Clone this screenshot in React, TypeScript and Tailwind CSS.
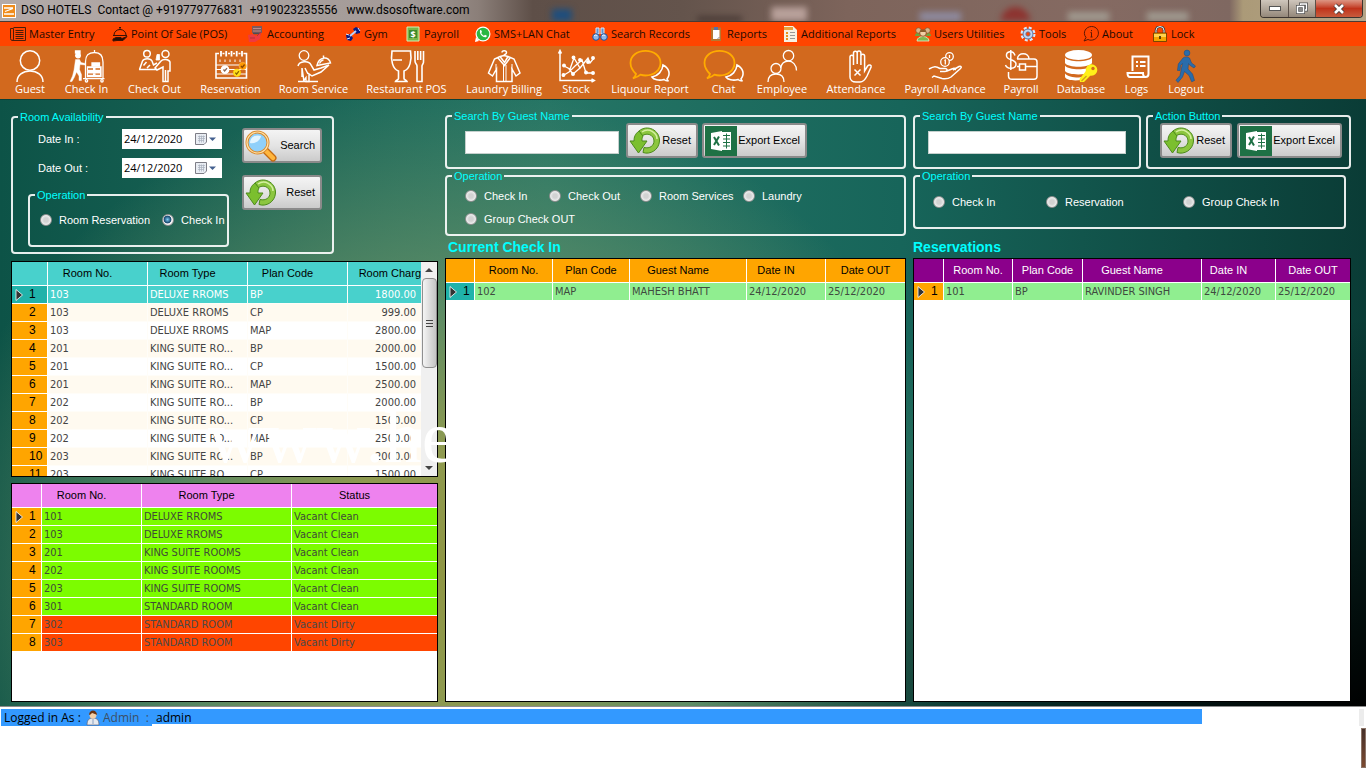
import type { ReactNode } from "react";
import clsx from "clsx";

const SANS = "font-['Open_Sans','Noto_Sans',sans-serif]";
const FORM = "font-['Liberation_Sans',sans-serif]";
const GRID = "font-['DejaVu_Sans_Condensed','Open_Sans',sans-serif]";

/* ---------- menu icons (16 x 16) ---------- */

function MenuIcon({ children }: { children: ReactNode }) {
	return <svg viewBox="0 0 16 16" className="w-4 h-4 shrink-0" fill="none">{children}</svg>;
}

const menuIcons = {
	master: <g stroke="#4a1c08" strokeWidth="1"><path d="M3.5 1.500h12v13h-13a2 2 0 0 1-2-2v-10h3v10.500a1.500 1.500 0 0 1-1.500 1.500" /><path d="M5.500 4.500h8M5.500 6.500h8M5.500 8.500h8M5.500 10.500h8M5.500 12.500h8" /></g>,
	pos: <g stroke="#3a1205"><path d="M2 9a6 5.500 0 0 1 12 0M1 9.500h14M8 3.500V1.500M7 1.500h2" /><path d="M1 13l3-1.500h5l1 1 5-2-4 4H5l-4 .5z" fill="#2a0d04" /></g>,
	accounting: <g><path d="M4 0h10v7H4z" fill="#7d5a5c" /><path d="M5 2.500h8M5 5h8" stroke="#b98a8a" /><path d="M5 7.500h8" stroke="#4c4c55" strokeWidth="1.500" /><path d="M0 9l5-1 3 2 5-4-1 7-5 3H1z" fill="#ee3b3f" /><path d="M9 10l4-4M2 12h5" stroke="#b3303a" /></g>,
	gym: <g><path d="M1 9l4-1 3 4-2 3-4-1zM8 3l3-2 4 2v4l-4 1z" fill="#0a1a80" /><path d="M5 10l6-5" stroke="#b9d3ff" strokeWidth="2" /><path d="M1 8l3 1M13 2l2 3M2 13l3-1" stroke="#dce8ff" /></g>,
	payroll: <g><path d="M2 1h12v14H2z" fill="#7ab648" stroke="#d5efb5" /><path d="M4 4h8v8H4z" fill="#3f8a2d" /><text x="8" y="11.500" fontSize="9" fontWeight="700" textAnchor="middle" fill="#fff">$</text></g>,
	chat: <g><circle cx="8" cy="8" r="7.500" fill="#fff" /><path d="M0 16l1-5 3 4z" fill="#fff" /><circle cx="8" cy="8" r="6.300" fill="#2cb742" /><path d="M5 4.500c1-1 1.500 0 2 1.500l-.8 1c.6 1.300 1.500 2 2.800 2.700l1-1c1.500.6 2.300 1 1.500 2-2 2-7.500-2-6.500-6.200z" fill="#fff" /></g>,
	search: <g><path d="M4 2h3v6H4zM9 2h3v6H9z" fill="#5b8fd0" stroke="#dce8fa" /><circle cx="4" cy="11" r="3.300" fill="#8db7ec" stroke="#244f96" /><circle cx="12" cy="11" r="3.300" fill="#8db7ec" stroke="#244f96" /><path d="M2 10c2-2 3 0 3 0M10 10c2-2 3 0 3 0" stroke="#fff" /></g>,
	reports: <g><path d="M3 1.500h10v13.500H3z" fill="#b77630" /><path d="M5 4h6.500v9H5z" fill="#fff" /><path d="M6 1h4v3H6z" fill="#5870a8" /><path d="M9.500 13l2-2" stroke="#889" /></g>,
	additional: <g><path d="M2 0h9l4 4v12H2z" fill="#f7f1e3" /><path d="M2 1h9v3H2z" fill="#e8a33f" /><path d="M4 7h2M4 10h2M4 13h2" stroke="#e8921f" strokeWidth="2" /><path d="M8 6.500h5M8 9.500h5M8 12.500h5" stroke="#999" /></g>,
	users: <g><path d="M2 15c0-6 12-6 12 0z" fill="#7fb84e" stroke="#e2f0d0" strokeWidth=".8" /><path d="M0 10c0-4 5-4 5 0zM11 10c0-4 5-4 5 0z" fill="#6aa540" /><circle cx="3.500" cy="4.500" r="2.700" fill="#d9b48a" stroke="#7a4a20" strokeWidth=".6" /><circle cx="12.500" cy="4.500" r="2.700" fill="#d9b48a" stroke="#7a4a20" strokeWidth=".6" /><circle cx="8" cy="7" r="3.300" fill="#f0cfa5" stroke="#7a4a20" strokeWidth=".8" /><path d="M5 6c0-3 6-3 6 0z" fill="#8a5a2a" /></g>,
	tools: <g><circle cx="8" cy="8" r="6.200" stroke="#dde9f8" strokeWidth="2.600" strokeDasharray="2.870 2" /><circle cx="8" cy="8" r="5" fill="#c4d6ee" stroke="#5279b0" /><circle cx="8" cy="8" r="2.200" fill="#ff4500" stroke="#5279b0" strokeWidth=".8" /></g>,
	about: <g stroke="#5a1806"><path d="M1 15l2-3.500C-1 6.500 3 .5 8.500.5S16 5 15.300 8.500C14.500 13 9 15.500 5 13.500z" /><path d="M8.500 6.500V11M8.500 4v1.200M7.500 11h2M7.500 6.500h1" /></g>,
	lock: <g><path d="M4 8V4.500a4 4 0 0 1 8 0V8" stroke="#3d3d3d" strokeWidth="2.600" /><path d="M4 8V4.500a4 4 0 0 1 8 0V8" stroke="#eee" strokeWidth="1" /><path d="M1.500 7h13v8.500h-13z" fill="#f5a400" stroke="#5a3a00" strokeWidth=".8" /><path d="M2 8h12v3H2z" fill="#ffd34d" /><path d="M8 10v3" stroke="#3a2500" strokeWidth="1.600" /></g>,
};

const menu = [
	{ icon: menuIcons.master, label: "Master Entry", w: "w-[102px]" },
	{ icon: menuIcons.pos, label: "Point Of Sale (POS)", w: "w-[136px]" },
	{ icon: menuIcons.accounting, label: "Accounting", w: "w-[97px]" },
	{ icon: menuIcons.gym, label: "Gym", w: "w-[60px]" },
	{ icon: menuIcons.payroll, label: "Payroll", w: "w-[70px]" },
	{ icon: menuIcons.chat, label: "SMS+LAN Chat", w: "w-[117px]" },
	{ icon: menuIcons.search, label: "Search Records", w: "w-[116px]" },
	{ icon: menuIcons.reports, label: "Reports", w: "w-[74px]" },
	{ icon: menuIcons.additional, label: "Additional Reports", w: "w-[133px]" },
	{ icon: menuIcons.users, label: "Users Utilities", w: "w-[105px]" },
	{ icon: menuIcons.tools, label: "Tools", w: "w-[63px]" },
	{ icon: menuIcons.about, label: "About", w: "w-[69px]" },
	{ icon: menuIcons.lock, label: "Lock", w: "w-[60px]" },
];

/* ---------- toolbar icons (32 x 32) ---------- */

const bubbles = (
	<g>
		<path d="M2 24C-2 20-3.500 17-3.500 13 -3.500 6 3 .8 11.500.8S26.500 6 26.500 13 20 25.500 11.500 25.500c-2 0-3.500-.3-5-.8C4 27-1 28.500-1 28.500S1.500 26.500 2 24z" stroke="#ffab00" strokeWidth="1.800" />
		<path d="M29 15c6 3 8 9 4 14 .5 1.500 1.500 2 1.500 2s-3 0-4.500-1.500c-5 1.500-10.500 0-12-2.500 6-1 10.500-6 11-12z" strokeWidth="1.600" />
	</g>
);

const tools = [
	{ label: "Guest", w: "w-[50px]", icon: <g strokeWidth="1.500"><circle cx="16" cy="10.500" r="9.700" /><path d="M3 32C3 25 9 21 16 21s13 4 13 11" /></g> },
	{
		label: "Check In", w: "w-[63px]", icon: <g>
			<circle cx="7" cy="5.500" r="2.300" fill="#fff" /><path d="M4.500 1h4.500v2H4.500z" fill="#fff" />
			<path d="M4.500 9.500h4l1.500 3 4.500 1v1.500l-5.500-.5-.5 5 2 5v6H8V26l-2.500-4-2 5L1 31.500H-1L1.500 26 3 20z" fill="#fff" strokeWidth=".4" />
			<path d="M14.500 28V12C14.500 5 18 2.500 23.500 2.500S32 5 32 12v16M23.500 2.500V0M12 28.700h21.500" />
			<circle cx="15.500" cy="30.800" r="1.200" /><circle cx="31" cy="30.800" r="1.200" />
			<path d="M21 13h7.500v3H21z" fill="#fff" /><path d="M16.500 17h13.500v4.500H16.500zM16.500 22h13.500v4.500H16.500z" fill="#fff" />
			<path d="M17 19h12M17 24.200h12" stroke="#d2691e" /><path d="M22 19h2.500M22 24.200h2.500" stroke="#fff" strokeWidth="2" />
		</g>
	},
	{
		label: "Check Out", w: "w-[73px]", icon: <g strokeWidth="1.500">
			<circle cx="8" cy="3.800" r="3.300" />
			<path d="M.5 19.500L3.500 11c1.500-3 8-3 9.500 0l1.500 4 3.500-2M4.500 15.500l3-3.500M0 19.500h18M11 15l-3 3" />
			<path d="M17 10l1-5.500h2.500v5.500z" fill="#fff" strokeWidth=".8" />
			<circle cx="26.500" cy="4" r="3.500" />
			<path d="M22 11c2-2.500 8-2 9 1v9h-2v10.500h-5V17l-6 3-2-2z" /><path d="M26.500 20v11" />
		</g>
	},
	{
		label: "Reservation", w: "w-[79px]", icon: <g>
			<path d="M4 3.500H1v24.500h30.500V3.500h-3M7.500 3.500h2M13 3.500h2M18 3.500h2M23.500 3.500h2" strokeWidth="1.600" />
			<path d="M6 1v5.500M11.200 1v5.500M16.500 1v5.500M21.700 1v5.500M27 1v5.500" strokeWidth="1.800" />
			<path d="M5 9.500v2.500M10 9.500v2.500M15 9.500v2.500M20 9.500v2.500M25 9.500v2.500M1 15h30M1 19.500h30M1 24h30" strokeWidth="1" />
			<circle cx="10" cy="19.700" r="3.700" fill="#fff" /><path d="M8.500 19.500l1.200 1.500 2.300-2.800" stroke="#865" />
			<circle cx="27.700" cy="16" r="3.700" fill="#ff9800" stroke="#ffb74d" strokeWidth=".6" /><path d="M26 16l1.300 1.500 2.300-3" stroke="#8a4500" />
			<circle cx="22" cy="22.700" r="3.700" fill="#ffe11a" stroke="#ffd000" strokeWidth=".6" /><path d="M20.300 22.600l1.300 1.500 2.300-3" stroke="#8a6500" />
		</g>
	},
	{
		label: "Room Service", w: "w-[87px]", icon: <g>
			<circle cx="6" cy="5.500" r="4.800" />
			<path d="M0 16c1-5 11-6 13-1l3 5 7-2 8-3-8 7-9 4-3-2v7.500H6L4 18v9M7 18l3 6" strokeWidth="1.500" /><path d="M0 31.500h5l3-4v4h12" />
			<path d="M19 15.500c1-5 4-7 7-7.500s6 2 6.500 5zM25.500 8V5.500" strokeWidth="1.500" /><path d="M21.500 13.500c1-2 2.500-3.500 4-3.500" />
		</g>
	},
	{
		label: "Restaurant POS", w: "w-[99px]", icon: <g strokeWidth="1.600">
			<path d="M1 1h18.500c1.500 9-.5 18-6.500 20v7.500c0 1.500 2.500 1.500 3 3H4.500c.5-1.500 3-1.500 3-3V21C1.500 19-.5 10 1 1zM2 10h9" />
			<path d="M24 1v10c0 3 2 3 2 5v15.500h5V16c0-2 2-2 1.500-5V1M26.800 1v9M29.600 1v9" />
		</g>
	},
	{
		label: "Laundry Billing", w: "w-[96px]", icon: <g strokeWidth="1.500">
			<path d="M14 2.500C14 0 18.500 0 18.500 2.500S16 3.500 16 6" />
			<path d="M12 6.500l4-1 4 1 6 2.500 6 14-4 3-4-7v12.500H8.500V19l-4 7-4-3 6-14zM12 6.500l4.500 6 3.500-6M10 8l6.500 7.500L22 8" />
			<path d="M15.500 15v16.500M18 15v16.500M8 14v5M24 14v5" strokeWidth="1" />
		</g>
	},
	{
		label: "Stock", w: "w-[48px]", icon: <g>
			<path d="M0 1v29.500h34M-1.500 3.500L0 .500l1.500 3M31.500 29l2.800 1.500-2.800 1.500" strokeWidth="1.500" />
			<path d="M4 16l6 3 4-11 6 10 8-10 2 5 4-5M4 25l5-3 6-6 7-6 4 13h7M9 19l4 5 7-6" />
			<g fill="#fff"><circle cx="4" cy="15.500" r="1.300" /><circle cx="13.500" cy="7.500" r="1.300" /><circle cx="3.500" cy="25" r="1.300" /><circle cx="13" cy="24" r="1.300" /><circle cx="20" cy="10" r="1.300" /><circle cx="28" cy="12" r="1.300" /><circle cx="33" cy="8" r="1.300" /><circle cx="26" cy="22.500" r="1.300" /><circle cx="33" cy="23" r="1.300" /></g>
		</g>
	},
	{ label: "Liquour Report", w: "w-[100px]", icon: bubbles },
	{ label: "Chat", w: "w-[47px]", icon: bubbles },
	{ label: "Employee", w: "w-[70px]", icon: <g><circle cx="22.500" cy="5.700" r="5.200" /><path d="M14.500 18c1-4.500 4-7 8-7s8 4 8 9.500" /><circle cx="10" cy="18.500" r="5" /><path d="M2 32c0-5 3-8 8-8s8 3 8 8" /></g> },
	{
		label: "Attendance", w: "w-[78px]", icon: <g>
			<path d="M10 27V7c0-2.500 3.500-2.500 3.500 0v8V3c0-2.500 3.700-2.500 3.700 0v11V3c0-3 3.700-2.500 3.700 0v12V6c0-2.500 3.700-2.500 3.700 0v15l3-5c1.500-2 4-1 3.500 1L27 26c-2 4-4 6-7 6h-4c-3.500 0-6-2-6-5z" strokeWidth="1.500" />
			<path d="M14.500 19.500l6 6M20.500 19.500l-6 6" strokeWidth="1.500" />
		</g>
	},
	{
		label: "Payroll Advance", w: "w-[100px]", icon: <g>
			<circle cx="20.500" cy="6.500" r="3.800" /><circle cx="16" cy="12" r="4.300" fill="#d2691e" /><path d="M15.300 10.500l1-.5v4.500M20.500 5v3" />
			<path d="M0 19c5-3 7-3 11-.5h5c3 0 2.500 3 0 3h-5M18 21l6-2.500c2-1 3 .5 2 1.500M24 20l6-3.500c2-1 3 1 1.500 2L22 27c-3 2-6 2-9 1.500L5 26l-2 1.500" strokeWidth="1.500" />
		</g>
	},
	{
		label: "Payroll", w: "w-[52px]", icon: <g>
			<path d="M10 5.500C8-.5 1 1.500 1.500 6s9.500 3 9.500 8-8.500 6-10.500 1M5.800 0v20" strokeWidth="1.500" />
			<path d="M12 9h17c2 0 3 1 3 3v14c0 2-1 3.300-3 3.300H7c-2 0-3.500-1-3.500-3.300v-4M12 16.500h3M20.500 16.500H32M12.500 9c0-7 11.500-7 11.500 0M14.500 14h6v6h-6z" strokeWidth="1.500" />
		</g>
	},
	{
		label: "Database", w: "w-[68px]", icon: <g stroke="none">
			<ellipse cx="13.500" cy="5" rx="13.500" ry="5" fill="#fff" />
			<path d="M0 7.500c3 5 24 5 27 0V13c-3 5-24 5-27 0zM0 15.500c3 5 24 5 27 0V19c-5 0-7 3-7 5-9 1-18 0-20-3zM0 23.500c3 4 13 4.500 19 3.500l-2.500 3C8 31 1 30 0 27z" fill="#fff" />
			<circle cx="26.500" cy="20" r="5.800" fill="#fff01a" /><path d="M21 21l5 4-7 7h-4l-.5-3z" fill="#fff01a" /><circle cx="28" cy="18.500" r="1.700" fill="#d2691e" /><path d="M16.500 31l5-5" stroke="#d2a01e" />
		</g>
	},
	{ label: "Logs", w: "w-[43px]", icon: <g strokeWidth="2"><path d="M11.500 21V6.500h16V24c0 2-1 3-3 3H9c-2 0-2.500-2-2.500-4h15.500c0 3 1 4 2.500 4" /><path d="M15 12h2M15 16h2M19 12h5.500M19 16h5.500" strokeWidth="1.800" /></g> },
	{
		label: "Logout", w: "w-[56px]", icon: <g stroke="#1f4f85" strokeWidth=".6" fill="#2a6cab">
			<circle cx="17" cy="3" r="2.900" />
			<path d="M13 8c1.500-1.500 5-1.500 6.500 0l2 5 4 3-1.500 2-4.500-3-1-1.500-.5 5.500 4.500 5 2 6.500-2.800 1.300-2.700-6.300-4.500-4-2 5.500-4.500 5.500-2-2.300 4-4.700 2.500-12-2 2-.5 5H7.500l.8-6.500z" />
		</g>
	},
];

/* ---------- form pieces ---------- */

function ResetIcon() {
	return (
		<svg viewBox="0 0 32 32" className="w-8 h-8 shrink-0" fill="none">
			<path d="M10 6C18-1 31 5 30.500 16 30 25 21 30 14 27.500l1-5c6 1.500 10-2 10-6.500 0-6-7-9-12-5z" fill="#8cc63f" stroke="#4d8a1c" />
			<path d="M13 7C20 2 28 8 28 14" stroke="#d4efa0" strokeWidth="1.500" />
			<path d="M10 6c-4 3-5 6-5 10H1l8.500 12L18 16h-5c0-2 0-3.500 1-5z" fill="#7bbf2e" stroke="#4d8a1c" />
		</svg>
	);
}

function SearchIcon() {
	return (
		<svg viewBox="0 0 32 32" className="w-8 h-8 shrink-0" fill="none">
			<path d="M20 20l8 8" stroke="#c46a10" strokeWidth="7" strokeLinecap="round" />
			<path d="M20 20l8 8" stroke="#ffb63d" strokeWidth="4.500" strokeLinecap="round" />
			<circle cx="12.500" cy="12.500" r="10.500" fill="#8fd0fa" stroke="#d98a2b" strokeWidth="3" />
			<circle cx="12.500" cy="12.500" r="10.500" stroke="#ffe0a8" strokeWidth="1.200" />
			<path d="M5 13c0-6 6-9 11-7-1 5-6 8-11 7z" fill="#e3f5ff" />
		</svg>
	);
}

function ExcelIcon() {
	return (
		<svg viewBox="0 0 32 30" className="w-8 h-[30px] shrink-0">
			<path d="M0 0h32v30H0z" fill="#1e7145" />
			<path d="M17 6h9v18h-9z" fill="#fff" />
			<path d="M18 9.500h7M18 13h7M18 16.500h7M18 20h7M21.500 7.500v15" stroke="#1e7145" strokeWidth="1" />
			<path d="M6 7l11-2v20L6 23z" fill="#fff" />
			<path d="M9 11l5 8.500M14 10.500l-5 8.500" stroke="#1e7145" strokeWidth="2" />
		</svg>
	);
}

function Group({ title, className, children }: { title: string; className?: string; children: ReactNode }) {
	return (
		<fieldset className={clsx("min-w-0 border-2 border-white/90 rounded", className)}>
			<legend className="ml-[5px] px-[2px] leading-[14px] text-[#00ffff]">{title}</legend>
			{children}
		</fieldset>
	);
}

function PushButton({ icon, className, children }: { icon: ReactNode; className?: string; children: ReactNode }) {
	return (
		<button className={clsx("h-[35px] shrink-0 flex items-center justify-between pl-px pr-[5px] rounded-[3px] border-2 border-[#8a8a8a] bg-linear-to-b from-[#f4f4f4] via-[#e4e4e4] to-[#cbcbcb] text-black whitespace-nowrap", className)}>
			{icon}
			<span>{children}</span>
		</button>
	);
}

function Radio({ name, label, checked, className }: { name: string; label: string; checked?: boolean; className?: string }) {
	return (
		<label className={clsx("flex items-center gap-[7px] leading-4 whitespace-nowrap text-white", className)}>
			<input
				type="radio"
				name={name}
				defaultChecked={checked}
				className="appearance-none shrink-0 w-3 h-3 rounded-full border border-[#8e8f8f] bg-[radial-gradient(circle,#d2d2d2_30%,#f4f4f4_75%)] checked:bg-[radial-gradient(circle_at_45%_45%,#7fd0f5_0,#14446b_45%,#f4f4f4_55%)]"
			/>
			{label}
		</label>
	);
}

function DateField({ id, label }: { id: string; label: string }) {
	return (
		<div className="flex items-center h-[18px] pl-[10px] text-white">
			<label htmlFor={id} className="w-[84px]">{label}</label>
			<div className="flex items-center w-[100px] h-5 bg-white">
				<input id={id} defaultValue="24/12/2020" className={clsx("w-[73px] pl-[2px] text-[11px] text-black outline-none", SANS)} />
				<svg viewBox="0 0 22 12" className="w-[22px] h-3" fill="none">
					<path d="M.5.500h11v8.500l-2.500 2.500H.5z" fill="#e9edf3" stroke="#7d7d86" />
					<path d="M3 3.500h7M3 5.500h7M3 7.500h6M4.500 2.500v7M6.500 2.500v7M8.500 2.500v7" stroke="#a9b0bd" strokeWidth=".7" />
					<path d="M14 4.500h7L17.500 8z" fill="#44608f" />
				</svg>
			</div>
		</div>
	);
}

/* ---------- data grids ---------- */

type Column = { title: string; w: string; head?: string; cell?: string };

function DataGrid({ label, columns, rows, headClass, rowHeadWidth, rowHead, rowClass, gap }: {
	label: string;
	columns: Column[];
	rows: string[][];
	headClass: string;
	rowHeadWidth: string;
	rowHead: (index: number) => string;
	rowClass: (row: string[], index: number) => string;
	gap?: string;
}) {
	return (
		<table aria-label={label} className="w-full table-fixed border-separate border-spacing-0">
			<colgroup>
				<col className={rowHeadWidth} />
				{columns.map((column) => <col key={column.title} className={column.w} />)}
			</colgroup>
			<thead>
				<tr className={clsx("h-6", headClass)}>
					<td className="p-0 border-b border-r border-white" />
					{columns.map((column) => (
						<th key={column.title} className={clsx("p-0 font-normal whitespace-nowrap overflow-hidden border-b border-r border-white last:border-r-0", FORM, column.head)}>
							{column.title}
						</th>
					))}
				</tr>
			</thead>
			<tbody className={clsx("text-[11px]", GRID)}>
				{rows.map((row, index) => (
					<tr key={index} className={clsx("h-[18px] leading-[17px]", rowClass(row, index))}>
						<th scope="row" className={clsx("p-0 font-normal text-black border-b border-r border-white", rowHead(index))}>
							<div className="flex items-center text-xs leading-[17px] font-['Liberation_Sans',sans-serif]">
								<span className="w-[17px] pl-[3px]">
									{index === 0 && (
										<svg viewBox="0 0 8 12" className="w-2 h-3"><path d="M1 .5l6.500 5.500L1 11.500z" fill="#333" stroke="#fff" strokeWidth=".8" /></svg>
									)}
								</span>
								{index + 1}
							</div>
						</th>
						{row.map((value, i) => (
							<td key={i} className={clsx("p-0 pl-[2px] whitespace-nowrap overflow-hidden border-b border-r last:border-r-0", gap ?? "border-white", columns[i].cell)}>
								{value}
							</td>
						))}
					</tr>
				))}
			</tbody>
		</table>
	);
}

const rates = [
	["103", "DELUXE RROMS", "BP", "1800.00"],
	["103", "DELUXE RROMS", "CP", "999.00"],
	["103", "DELUXE RROMS", "MAP", "2800.00"],
	["201", "KING SUITE RO...", "BP", "2000.00"],
	["201", "KING SUITE RO...", "CP", "1500.00"],
	["201", "KING SUITE RO...", "MAP", "2500.00"],
	["202", "KING SUITE RO...", "BP", "2000.00"],
	["202", "KING SUITE RO...", "CP", "1500.00"],
	["202", "KING SUITE RO...", "MAP", "2500.00"],
	["203", "KING SUITE RO...", "BP", "2000.00"],
	["203", "KING SUITE RO...", "CP", "1500.00"],
];

const rooms = [
	["101", "DELUXE RROMS", "Vacant Clean"],
	["103", "DELUXE RROMS", "Vacant Clean"],
	["201", "KING SUITE ROOMS", "Vacant Clean"],
	["202", "KING SUITE ROOMS", "Vacant Clean"],
	["203", "KING SUITE ROOMS", "Vacant Clean"],
	["301", "STANDARD ROOM", "Vacant Clean"],
	["302", "STANDARD ROOM", "Vacant Dirty"],
	["303", "STANDARD ROOM", "Vacant Dirty"],
];

function TitleBar() {
	return (
		<header className="relative flex items-center h-[22px] pl-[2px] border-b border-[#4a3a35] overflow-hidden bg-[linear-gradient(90deg,#b3aaa8_0%,#a39a97_30%,#8b7f79_35%,#5e4f48_39%,#64544c_50%,#7d645b_62%,#856a62_80%,#7f6861_90%,#ab9a78_91%,#b5a487_100%)]">
			<svg viewBox="0 0 14 14" className="w-[14px] h-[14px] shrink-0">
				<path d="M0 0h14v14H0z" fill="#fff" /><path d="M1 1h12v12H1z" fill="#f08c1c" /><path d="M2 10h10M2 4h9M3 7.500l8-3" stroke="#fff" fill="none" strokeWidth="1.300" />
			</svg>
			<h1 className="shrink-0 pl-[5px] text-[12px] leading-[21px] text-black whitespace-pre font-['Roboto',sans-serif]">DSO HOTELS  Contact @ +919779776831  +919023235556   www.dsosoftware.com</h1>
			<svg viewBox="0 0 800 21" preserveAspectRatio="none" className="flex-1 min-w-0 h-[21px] blur-[3px]">
				<path d="M83 9h20v14H83z" fill="#1f4e7d" /><path d="M230 17h45v6h-45z" fill="#3d302c" /><path d="M305 7h36v14h-36z" fill="#b8a09a" />
				<path d="M455 12h42v10h-42z" fill="#8e8ba0" /><circle cx="552" cy="22" r="15" fill="#8d3430" /><path d="M605 12h42v10h-42zM685 12h42v10h-42z" fill="#a09a90" />
			</svg>
			<div className="self-start flex shrink-0 mr-[3px] h-[18px] rounded-b-[4px] border border-t-0 border-[#3c342f] overflow-hidden">
				<button aria-label="Minimize" className="w-7 border-r border-[#5c5048] bg-linear-to-b from-[#cfc6bc] to-[#94887a] flex justify-center items-center"><span className="w-3 h-[5px] bg-white border border-[#555]" /></button>
				<button aria-label="Restore" className="w-[27px] border-r border-[#5c5048] bg-linear-to-b from-[#cfc6bc] to-[#94887a] flex justify-center items-center">
					<svg viewBox="0 0 14 13" className="w-[14px] h-[13px]" fill="none"><path d="M5.500 2h6v6h-6z" stroke="#555" strokeWidth="3" /><path d="M5.500 2h6v6h-6z" stroke="#fff" strokeWidth="1.300" /><path d="M2.500 4.500h6v6h-6z" fill="#888" stroke="#555" strokeWidth="3" /><path d="M2.500 4.500h6v6h-6z" stroke="#fff" strokeWidth="1.500" /></svg>
				</button>
				<button aria-label="Close" className="w-[46px] bg-linear-to-b from-[#dc9583] via-[#c0321a] to-[#c85a3c] flex justify-center items-center">
					<svg viewBox="0 0 14 12" className="w-[14px] h-3"><path d="M3 2l8 8M11 2l-8 8" stroke="#4a3a3a" strokeWidth="4.500" /><path d="M3 2l8 8M11 2l-8 8" stroke="#fff" strokeWidth="2.600" /></svg>
				</button>
			</div>
		</header>
	);
}

export default function App() {
	return (
		<div className={clsx("flex flex-col min-h-screen bg-white overflow-x-hidden text-[11px]", FORM)}>
			<TitleBar />

			<nav className={clsx("flex items-center h-6 pl-[10px] bg-[#ff4500] text-[11px] text-[#1e0a02]", SANS)}>
				{menu.map((item) => (
					<button key={item.label} className={clsx("flex items-center gap-[3px] shrink-0 whitespace-nowrap", item.w)}>
						<MenuIcon>{item.icon}</MenuIcon>
						{item.label}
					</button>
				))}
			</nav>

			<div className={clsx("flex h-[53px] pt-1 pl-[5px] bg-[#d2691e] text-[11px] text-white", SANS)}>
				{tools.map((item) => (
					<button key={item.label} className={clsx("flex flex-col items-center shrink-0 whitespace-nowrap leading-[14px]", item.w)}>
						<svg viewBox="0 0 32 32" className="w-8 h-8 overflow-visible" fill="none" stroke="#fff" strokeWidth="1.300">{item.icon}</svg>
						{item.label}
					</button>
				))}
			</div>

			<main className="relative flex-1 grid grid-cols-[427fr_461fr_438fr] gap-[7px] pl-[11px] pr-[15px] pb-1 border-t border-[#0a4038] bg-[radial-gradient(ellipse_60%_75%_at_110%_110%,#000_20%,transparent_100%),radial-gradient(ellipse_38%_80%_at_33%_78%,#8f9644_0%,#8f9a50_25%,rgba(111,149,104,0.75)_55%,transparent_100%),linear-gradient(90deg,#0d5347,#257565_40%,#17655a_66%,#0a3c36)]">
				<section className="flex flex-col pt-[10px] min-w-0">
					<Group title="Room Availability" className="w-[323px] h-36">
						<div className="flex gap-[13px] pl-[15px]">
							<div className="w-[201px] flex flex-col gap-[11px] pt-[6px]">
								<DateField id="date-in" label="Date In :" />
								<DateField id="date-out" label="Date Out :" />
								<Group title="Operation" className="h-[59px]">
									<div className="flex gap-3 pl-[10px] pt-[10px]">
										<Radio name="availability" label="Room Reservation" />
										<Radio name="availability" label="Check In" checked />
									</div>
								</Group>
							</div>
							<div className="flex flex-col gap-3 pt-1">
								<PushButton icon={<SearchIcon />} className="w-20">Search</PushButton>
								<PushButton icon={<ResetIcon />} className="w-20">Reset</PushButton>
							</div>
						</div>
					</Group>

					<div className="mt-[7px] h-[216px] flex border border-black bg-white overflow-hidden">
						<div className="flex-1 min-w-0">
							<DataGrid
								label="Room rates"
								headClass="bg-[#48d1cc] text-black"
								rowHeadWidth="w-[36px]"
								rowHead={(index) => (index === 0 ? "bg-[#20b2aa]" : "bg-[#ffa500]")}
								rowClass={(_, index) => (index === 0 ? "bg-[#48d1cc] text-white" : index % 2 ? "bg-[#fffaf0] text-[#444]" : "bg-white text-[#444]")}
								gap="border-[#fffdf8]"
								rows={rates}
								columns={[
									{ title: "Room No.", w: "w-[100px]", head: "pr-5" },
									{ title: "Room Type", w: "w-[100px]", head: "pr-5" },
									{ title: "Plan Code", w: "w-[100px]", head: "pr-5" },
									{ title: "Room Charg", w: "", head: "text-right", cell: "text-right pr-[5px]" },
								]}
							/>
						</div>
						<div className="w-4 flex flex-col items-center bg-[#f0f0f0]">
							<svg viewBox="0 0 8 16" className="w-2 h-4"><path d="M0 10l4-4 4 4z" fill="#444" /></svg>
							<div className="w-[15px] h-[90px] flex flex-col items-center justify-center gap-[2px] rounded-sm border border-[#8f8f8f] bg-linear-to-r from-[#f5f5f5] to-[#c4c4c4]">
								<span className="w-[7px] h-px bg-[#444]" />
								<span className="w-[7px] h-px bg-[#444]" />
								<span className="w-[7px] h-px bg-[#444]" />
							</div>
							<svg viewBox="0 0 8 16" className="w-2 h-4 mt-auto"><path d="M0 6l4 4 4-4z" fill="#444" /></svg>
						</div>
					</div>

					<div className="mt-[6px] flex-1 border border-black bg-white">
						<DataGrid
							label="Room status"
							headClass="bg-[#ee82ee] text-black"
							rowHeadWidth="w-[30px]"
							rowHead={() => "bg-[#ffa500]"}
							rowClass={(row) => (row[2] === "Vacant Dirty" ? "bg-[#ff4500] text-[#4a4a4a]" : "bg-[#7cfc00] text-[#3f4a38]")}
							rows={rooms}
							columns={[
								{ title: "Room No.", w: "w-[100px]", head: "pr-5" },
								{ title: "Room Type", w: "w-[150px]", head: "pr-5" },
								{ title: "Status", w: "", head: "pr-5" },
							]}
						/>
					</div>
				</section>

				<section className="flex flex-col pt-[9px] min-w-0">
					<Group title="Search By Guest Name" className="h-[60px]">
						<div className="flex items-start pl-[18px]">
							<input aria-label="Guest name" className="w-[154px] h-[23px] mt-2 mr-[7px] px-1 bg-white border border-[#c5d0cd] text-black outline-none" />
							<PushButton icon={<ResetIcon />} className="w-[72px] mr-1">Reset</PushButton>
							<PushButton icon={<ExcelIcon />} className="w-[105px]">Export Excel</PushButton>
						</div>
					</Group>
					<Group title="Operation" className="h-[67px]">
						<div className="grid grid-cols-[84px_91px_103px_auto] gap-y-[7px] pl-[18px] pt-[5px]">
							<Radio name="checkin" label="Check In" />
							<Radio name="checkin" label="Check Out" />
							<Radio name="checkin" label="Room Services" />
							<Radio name="checkin" label="Laundry" />
							<Radio name="checkin" label="Group Check OUT" className="col-span-2" />
						</div>
					</Group>
					<h2 className="pl-[3px] text-sm leading-[22px] font-bold text-[#00ffff] font-['Liberation_Sans',sans-serif]">Current Check In</h2>
					<div className="flex-1 border border-black bg-white">
						<DataGrid
							label="Current check in"
							headClass="bg-[#ffa500] text-black"
							rowHeadWidth="w-[29px]"
							rowHead={() => "bg-[#20b2aa]"}
							rowClass={() => "bg-[#90ee90] text-[#3f4a3f]"}
							rows={[["102", "MAP", "MAHESH BHATT", "24/12/2020", "25/12/2020"]]}
							columns={[
								{ title: "Room No.", w: "w-[78px]" },
								{ title: "Plan Code", w: "w-[77px]" },
								{ title: "Guest Name", w: "w-[117px]", head: "pr-5" },
								{ title: "Date IN", w: "w-[79px]", head: "pr-5" },
								{ title: "Date OUT", w: "" },
							]}
						/>
					</div>
				</section>

				<section className="flex flex-col pt-[9px] min-w-0">
					<div className="flex h-[60px] gap-[5px]">
						<Group title="Search By Guest Name" className="w-[228px]">
							<div className="px-[13px]">
								<input aria-label="Reservation guest name" className="w-full h-[23px] mt-2 px-1 bg-white border border-[#c5d0cd] text-black outline-none" />
							</div>
						</Group>
						<Group title="Action Button" className="flex-1">
							<div className="flex gap-[5px] pl-3">
								<PushButton icon={<ResetIcon />} className="w-[72px]">Reset</PushButton>
								<PushButton icon={<ExcelIcon />} className="w-[105px]">Export Excel</PushButton>
							</div>
						</Group>
					</div>
					<Group title="Operation" className="h-[60px] mr-[5px] mb-[7px]">
						<div className="flex pl-[18px] pt-[11px]">
							<Radio name="reservations" label="Check In" className="w-[113px]" />
							<Radio name="reservations" label="Reservation" className="w-[137px]" />
							<Radio name="reservations" label="Group Check In" />
						</div>
					</Group>
					<h2 className="text-sm leading-[22px] font-bold text-[#00ffff] font-['Liberation_Sans',sans-serif]">Reservations</h2>
					<div className="flex-1 border border-black bg-white">
						<DataGrid
							label="Reservations"
							headClass="bg-[#8b008b] text-white"
							rowHeadWidth="w-[30px]"
							rowHead={() => "bg-[#ffa500]"}
							rowClass={() => "bg-[#90ee90] text-[#3f4a3f]"}
							rows={[["101", "BP", "RAVINDER SINGH", "24/12/2020", "25/12/2020"]]}
							columns={[
								{ title: "Room No.", w: "w-[69px]" },
								{ title: "Plan Code", w: "w-[70px]" },
								{ title: "Guest Name", w: "w-[119px]", head: "pr-5" },
								{ title: "Date IN", w: "w-[74px]", head: "pr-5" },
								{ title: "Date OUT", w: "" },
							]}
						/>
					</div>
				</section>

				<p className="absolute left-[208px] top-[299px] text-[75px] leading-[75px] text-white pointer-events-none font-['Liberation_Serif',serif]">www.he</p>
			</main>

			<footer className={clsx("relative h-[62px] pt-[2px] pl-px border-t border-[#8c8c8c] bg-white text-xs", SANS)}>
				<div className="h-[15px] w-[88%] bg-[#3399ff]">
					<div className="flex items-center h-[17px] w-[151px] pl-[3px] bg-[#3399ff] whitespace-nowrap leading-[17px]">
						<span className="w-[82px] shrink-0 text-black">Logged in As :</span>
						<svg viewBox="0 0 14 16" className="w-[14px] h-4 mr-[3px] shrink-0">
							<path d="M1 15c0-6 3-7 6-7s6 1 6 7z" fill="#e6e9ee" stroke="#667" strokeWidth=".7" /><path d="M7 9v5" stroke="#8aa0c0" />
							<circle cx="7" cy="5" r="3.500" fill="#f3cfa8" /><path d="M3 5c0-6 8-6 8 0-2-1-4-2-5-2-1 1-2 2-3 2z" fill="#6b3413" />
						</svg>
						<span className="w-[53px] shrink-0 text-[#3c4f66]">Admin&nbsp; :</span>
						<span className="text-black">admin</span>
					</div>
				</div>
				<div className="absolute right-[2px] top-[2px] w-[5px] h-[17px] bg-[#ececec]" />
				<div className="absolute right-0 bottom-0 w-[5px] h-10 border border-[#8b7468] bg-linear-to-b from-[#463029] to-[#7c4a30]" />
			</footer>
		</div>
	);
}
